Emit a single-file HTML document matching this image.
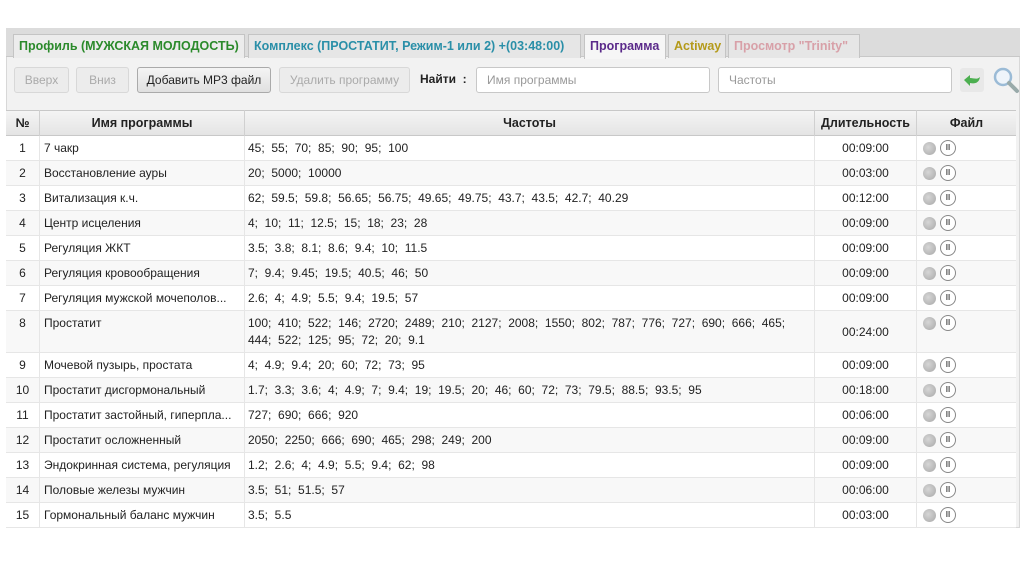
<!DOCTYPE html>
<html><head><meta charset="utf-8"><style>
*{box-sizing:border-box;margin:0;padding:0}
body{width:1024px;height:574px;background:#fff;font-family:"Liberation Sans","Noto Sans CJK SC",sans-serif;position:relative;overflow:hidden;color:#222}
.panel{position:absolute;left:6px;top:28px;width:1014px;height:500px;background:#f2f2f2;border:1px solid #d8d8d8}
.tabs{position:absolute;left:6px;top:28px;width:1014px;height:29px;background:#dcdcdc;border-bottom:1px solid #c8c8c8}
.tab{position:absolute;top:34px;height:24px;font-size:12.5px;font-weight:bold;line-height:23px;padding:0 5px;background:#e6e6e6;border:1px solid #c4c4c4;border-bottom:none;white-space:nowrap}
.btn{position:absolute;top:67px;height:26px;font-size:12px;line-height:24px;text-align:center;border:1px solid #d8d8d8;border-radius:3px;background:#ececec;color:#aaa}
.inp{position:absolute;top:67px;height:26px;border:1px solid #c8c8c8;border-radius:3px;background:#fff;font-size:12px;line-height:24px;padding-left:10px;color:#999}
.hdr{position:absolute;top:110px;height:26px;left:6px;width:1010px;background:linear-gradient(#f4f4f4,#e4e4e4);border-top:1px solid #c8c8c8;border-bottom:1px solid #c8c8c8}
.h{position:absolute;top:110px;height:26px;font-size:12.5px;font-weight:bold;line-height:26px;text-align:center;border-right:1px solid #d0d0d0}
.row{position:absolute;left:6px;width:1010px;border-bottom:1px solid #e6e6e6;font-size:12px}
.row div{position:absolute;top:0;height:100%;border-right:1px solid #e6e6e6}
.c0{left:0;width:34px;text-align:center}
.c1{left:34px;width:205px;padding-left:4px}
.c2{left:239px;width:570px;padding-left:3px}
.c3{left:809px;width:102px;text-align:center}
.c4{left:911px;width:99px}
.dot{position:absolute;left:6px;top:6px;width:13px;height:13px;border-radius:50%;background:radial-gradient(circle at 40% 40%,#d6d6d6,#a8a8a8)}
.pz{position:absolute;left:23px;top:4px;width:16px;height:16px;border-radius:50%;border:1px solid #888;background:#fff;font-size:8px;line-height:14px;text-align:center;font-weight:bold;color:#555}
</style></head><body>
<div class="panel"></div>
<div class="tabs"></div>
<div class="tab" style="left:13px;width:232px;color:#2b8a2b;background:#ececec">Профиль (МУЖСКАЯ МОЛОДОСТЬ)</div>
<div class="tab" style="left:248px;width:333px;color:#2a8fa8">Комплекс (ПРОСТАТИТ, Режим-1 или 2) +(03:48:00)</div>
<div class="tab" style="left:584px;width:82px;color:#5b2a8a;background:#f6f6f6;height:25px">Программа</div>
<div class="tab" style="left:668px;width:58px;color:#b49a1a">Actiway</div>
<div class="tab" style="left:728px;width:132px;color:#d8a0a8;font-weight:bold">Просмотр "Trinity"</div>
<div class="btn" style="left:14px;width:55px">Вверх</div>
<div class="btn" style="left:76px;width:53px">Вниз</div>
<div class="btn" style="left:137px;width:134px;color:#222;border-color:#aaa;background:linear-gradient(#f4f4f4,#e0e0e0)">Добавить MP3 файл</div>
<div class="btn" style="left:279px;width:131px">Удалить программу</div>
<div style="position:absolute;left:420px;top:72px;font-size:12px;font-weight:bold">Найти &nbsp;:</div>
<div class="inp" style="left:476px;width:234px">Имя программы</div>
<div class="inp" style="left:718px;width:234px">Частоты</div>
<div style="position:absolute;left:960px;top:68px;width:24px;height:24px;background:#e8e8e8;border-radius:3px"></div>
<svg style="position:absolute;left:962px;top:72px" width="20" height="16"><path d="M2 8 L8 3 L8 6 C12 6 15 8 18 5 C17 11 13 12 8 11 L8 14 Z" fill="#4caf50"/></svg>
<svg style="position:absolute;left:992px;top:66px" width="28" height="28"><circle cx="11" cy="11" r="8" fill="#eef4fa" stroke="#9bbbd6" stroke-width="2.5"/><path d="M17 17 L25 25" stroke="#9aa" stroke-width="4" stroke-linecap="round"/></svg>
<div class="hdr"></div>
<div class="h" style="left:6px;width:34px">№</div>
<div class="h" style="left:40px;width:205px">Имя программы</div>
<div class="h" style="left:245px;width:570px">Частоты</div>
<div class="h" style="left:815px;width:102px">Длительность</div>
<div class="h" style="left:917px;width:99px;border:none">Файл</div>
<div style="position:absolute;left:1015px;top:136px;width:1px;height:392px;background:#ccc"></div>
<div id="rows"></div>
<script>
var d=[["7 чакр","45;  55;  70;  85;  90;  95;  100","00:09:00"],
["Восстановление ауры","20;  5000;  10000","00:03:00"],
["Витализация к.ч.","62;  59.5;  59.8;  56.65;  56.75;  49.65;  49.75;  43.7;  43.5;  42.7;  40.29","00:12:00"],
["Центр исцеления","4;  10;  11;  12.5;  15;  18;  23;  28","00:09:00"],
["Регуляция ЖКТ","3.5;  3.8;  8.1;  8.6;  9.4;  10;  11.5","00:09:00"],
["Регуляция кровообращения","7;  9.4;  9.45;  19.5;  40.5;  46;  50","00:09:00"],
["Регуляция мужской мочеполов...","2.6;  4;  4.9;  5.5;  9.4;  19.5;  57","00:09:00"],
["Простатит","100;  410;  522;  146;  2720;  2489;  210;  2127;  2008;  1550;  802;  787;  776;  727;  690;  666;  465;<br>444;  522;  125;  95;  72;  20;  9.1","00:24:00"],
["Мочевой пузырь, простата","4;  4.9;  9.4;  20;  60;  72;  73;  95","00:09:00"],
["Простатит дисгормональный","1.7;  3.3;  3.6;  4;  4.9;  7;  9.4;  19;  19.5;  20;  46;  60;  72;  73;  79.5;  88.5;  93.5;  95","00:18:00"],
["Простатит застойный, гиперпла...","727;  690;  666;  920","00:06:00"],
["Простатит осложненный","2050;  2250;  666;  690;  465;  298;  249;  200","00:09:00"],
["Эндокринная система, регуляция","1.2;  2.6;  4;  4.9;  5.5;  9.4;  62;  98","00:09:00"],
["Половые железы мужчин","3.5;  51;  51.5;  57","00:06:00"],
["Гормональный баланс мужчин","3.5;  5.5","00:03:00"]];
var y=136,h="";
d.forEach(function(r,i){var H=i==7?42:25;var lh=i==7?"line-height:17px;padding-top:4px":"line-height:24px";
h+='<div class="row" style="top:'+y+'px;height:'+H+'px;background:'+(i%2?'#f8f8f8':'#fff')+'">'+
'<div class="c0" style="'+lh+'">'+(i+1)+'</div><div class="c1" style="'+lh+'">'+r[0]+'</div><div class="c2" style="'+lh+';white-space:pre">'+r[1]+'</div><div class="c3" style="line-height:'+(i==7?H:24)+'px">'+r[2]+'</div><div class="c4" style="border:none"><span class="dot"></span><span class="pz">II</span></div></div>';
y+=H;});
document.getElementById("rows").innerHTML=h;
</script>
</body></html>
